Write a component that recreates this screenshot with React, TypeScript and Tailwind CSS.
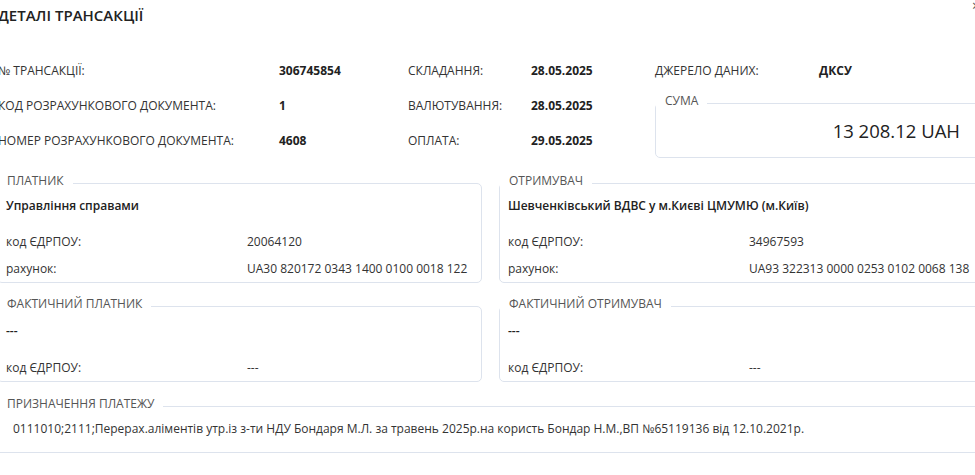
import React from 'react';
import { ReactNode } from 'react';

type BoxProps = { title: string; children: ReactNode; className?: string };

const Box = ({ title, children, className = '' }: BoxProps) => {
  return (
    <fieldset className={`min-w-0 rounded-[5px] border border-[#dde3ed] ${className}`}>
      <legend className="ml-0 px-[9px] pb-[5px] text-[12px] leading-[16px] text-[#555]">{title}</legend>
      {children}
    </fieldset>
  );
};

const Row = ({ label, value }: { label: string; value: string }) => {
  return (
    <div className="flex h-[27px] items-center">
      <span className="w-[241px] shrink-0">{label}</span>
      <span className="whitespace-nowrap">{value}</span>
    </div>
  );
};

const Party = ({ title, name, code, account }: { title: string; name: string; code: string; account?: string }) => {
  return (
    <Box title={title}>
      <div className={`px-2 text-[12px] text-[#333] ${account ? 'pt-[4px]' : 'pt-[6px]'}`}>
        <div className="whitespace-nowrap font-semibold leading-[16px] text-[#222]">{name}</div>
        <div className={account ? 'mt-[14px]' : 'mt-[15px]'}>
          <Row label="код ЄДРПОУ:" value={code} />
          {account && <Row label="рахунок:" value={account} />}
        </div>
      </div>
    </Box>
  );
};

const info = [
  ['№ ТРАНСАКЦІЇ:', '306745854', 'СКЛАДАННЯ:', '28.05.2025'],
  ['КОД РОЗРАХУНКОВОГО ДОКУМЕНТА:', '1', 'ВАЛЮТУВАННЯ:', '28.05.2025'],
  ['НОМЕР РОЗРАХУНКОВОГО ДОКУМЕНТА:', '4608', 'ОПЛАТА:', '29.05.2025'],
];

const App = () => {
  return (
    <div className="relative h-[475px] w-[975px] overflow-hidden bg-white font-['Open_Sans',sans-serif] text-[12px] text-[#333]">
      <span className="absolute left-[972px] top-[-5px] text-[14px] text-[#555]">×</span>
      <div className="-ml-[3px] w-[987px]">
        <h1 className="pl-[1px] pt-[5px] text-[15px] font-semibold leading-[20px] text-[#222]">ДЕТАЛІ ТРАНСАКЦІЇ</h1>

        <div className="mt-[28px] flex pl-[1px]">
          <div className="grid grid-cols-[281px_129px_123px_124px] grid-rows-[35px_35px_35px] items-center">
            {info.map((r) => (
              <React.Fragment key={r[0]}>
                <span className="whitespace-nowrap">{r[0]}</span>
                <span className="font-bold text-[#222]">{r[1]}</span>
                <span>{r[2]}</span>
                <span className="font-bold text-[#222]">{r[3]}</span>
              </React.Fragment>
            ))}
          </div>
          <div className="flex-1">
            <div className="flex h-[35px] items-center">
              <span className="w-[164px]">ДЖЕРЕЛО ДАНИХ:</span>
              <span className="font-bold text-[#222]">ДКСУ</span>
            </div>
            <Box title="СУМА" className="mt-[5px]">
              <div className="pb-[14px] pr-[23px] pt-[5px] text-right text-[18.5px] font-medium leading-[24px] text-[#222]">
                13 208.12 UAH
              </div>
            </Box>
          </div>
        </div>

        <div className="mt-[15px] grid grid-cols-2 gap-x-[17px] gap-y-[13px]">
          <Party title="ПЛАТНИК" name="Управління справами" code="20064120" account="UA30 820172 0343 1400 0100 0018 122" />
          <Party
            title="ОТРИМУВАЧ"
            name="Шевченківський ВДВС у м.Києві ЦМУМЮ (м.Київ)"
            code="34967593"
            account="UA93 322313 0000 0253 0102 0068 138"
          />
          <Party title="ФАКТИЧНИЙ ПЛАТНИК" name="---" code="---" />
          <Party title="ФАКТИЧНИЙ ОТРИМУВАЧ" name="---" code="---" />
        </div>

        <fieldset className="mt-[14px] min-w-0 border-y border-[#dde3ed]">
          <legend className="ml-[1px] px-[9px] pb-[5px] text-[12px] leading-[16px] text-[#555]">ПРИЗНАЧЕННЯ ПЛАТЕЖУ</legend>
          <div className="px-4 pb-[15px] pt-[4px] leading-[16px] text-[#333]">
            0111010;2111;Перерах.аліментів утр.із з-ти НДУ Бондаря М.Л. за травень 2025р.на користь Бондар Н.М.,ВП №65119136 від 12.10.2021р.
          </div>
        </fieldset>
      </div>
    </div>
  );
};

export default App;
